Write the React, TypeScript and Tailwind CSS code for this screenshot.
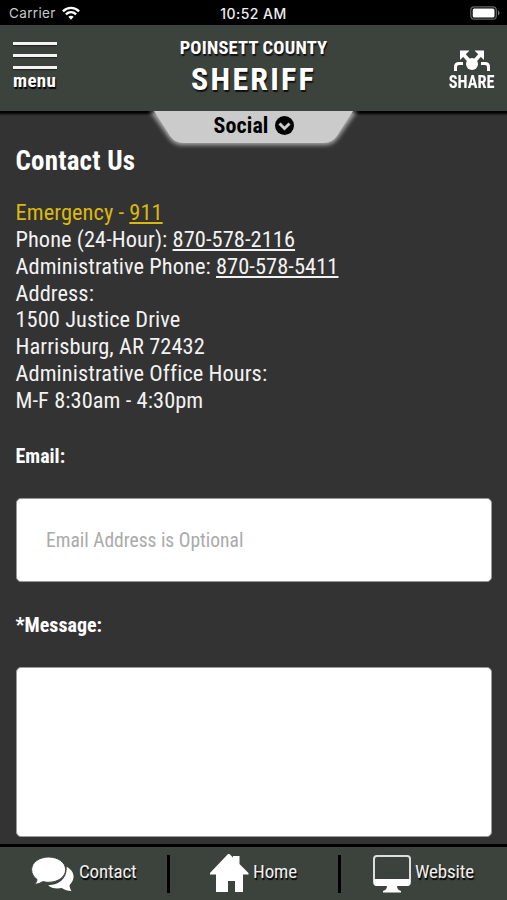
import type { ReactNode } from "react";

interface NavItemProps {
  label: string;
  icon: ReactNode;
  className: string;
}

const CONTACT_LINES = [
  "Address:",
  "1500 Justice Drive",
  "Harrisburg, AR 72432",
  "Administrative Office Hours:",
  "M-F 8:30am - 4:30pm",
];

function StatusBar() {
  return (
    <div className="relative flex h-[25px] shrink-0 items-center justify-between bg-black pl-[9px] pr-[7px] font-['Inter','Liberation_Sans',sans-serif] text-white [font-stretch:normal]">
      <div className="flex items-center gap-[6px] pt-[2px]">
        <span className="text-[13.5px] tracking-[0.35px] text-[#c8c8c8]">Carrier</span>
        <svg className="mb-[2px]" width="18" height="14" viewBox="0 0 19 14" fill="none" stroke="white" strokeWidth="2.6">
          <path d="M1 5.2C6 .4 13 .4 18 5.2" />
          <path d="M4.1 8.4c3.2-2.9 7.6-2.9 10.8 0" />
          <path d="M9.5 14 6.7 11c1.6-1.4 4-1.4 5.6 0z" fill="white" stroke="none" />
        </svg>
      </div>
      <span className="absolute left-0 right-0 top-[4px] text-center text-[14px] font-medium leading-[20px] tracking-[0.45px] text-[#eee]">
        10:52 AM
      </span>
      <svg width="30" height="14" viewBox="0 0 30 14">
        <rect x=".8" y=".8" width="25.5" height="12.4" rx="3.5" fill="none" stroke="#666" strokeWidth="1.2" />
        <rect x="2.7" y="2.5" width="21.8" height="9" rx="1.5" fill="white" />
        <path d="M28 4.5c2 1 2 4 0 5z" fill="#777" />
      </svg>
    </div>
  );
}

function ShareIcon() {
  return (
    <svg width="38" height="22" viewBox="0 0 38 22" fill="none" stroke="white" strokeWidth="3">
      <path d="M2.5 21v-4q0-3.5 3.5-3.5H10" />
      <path d="M35.5 21v-4q0-3.5-3.5-3.5H28" />
      <path d="m19 14-8-9M19 14l8-9" strokeWidth="3.6" />
      <circle cx="19" cy="14" r="6" fill="white" stroke="none" />
      <path d="M7 .5h9.5L7 10zM31 .5h-9.5L31 10z" fill="white" stroke="none" />
    </svg>
  );
}

function Header() {
  return (
    <header className="relative z-10 flex h-[86px] shrink-0 justify-between bg-[#3c423c] text-white shadow-[0_2px_2px_1px_#000]">
      <button className="flex w-[70px] flex-col pl-[13px] pt-[17px] text-left">
        <span className="flex w-[44px] flex-col gap-[9px]">
          <span className="h-[3px] bg-[#f2f5f2] shadow-[0_1px_1px_#222]" />
          <span className="h-[3px] bg-[#f2f5f2] shadow-[0_1px_1px_#222]" />
          <span className="h-[3px] bg-[#f2f5f2] shadow-[0_1px_1px_#222]" />
        </span>
        <span className="mt-[1px] text-[19px] font-bold leading-[22px] tracking-[0.3px] [text-shadow:1px_2px_1px_#000]">
          menu
        </span>
      </button>
      <h1 className="flex flex-col items-center pt-[12px] font-bold [text-shadow:1px_2px_1px_#111]">
        <span className="text-[18.5px] leading-[22px] tracking-[0.2px]">POINSETT COUNTY</span>
        <span className="mt-[1px] text-[32px] leading-[38px] tracking-[2.2px]">SHERIFF</span>
      </h1>
      <button className="flex w-[70px] flex-col items-center pt-[25px]">
        <ShareIcon />
        <span className="scale-x-[0.86] text-[19px] font-bold leading-[20px]">SHARE</span>
      </button>
    </header>
  );
}

function SocialTab() {
  return (
    <div className="relative z-20 flex h-[34px] shrink-0 justify-center">
      <svg className="absolute left-[142px] top-0" width="224" height="42" viewBox="0 0 224 42">
        <defs>
          <filter id="glow" x="-10%" y="-20%" width="120%" height="150%">
            <feGaussianBlur stdDeviation="2" />
          </filter>
        </defs>
        <path d="M8 0h207l-19 27q-5 7-13 7H40q-8 0-13-7z" fill="#aaa" filter="url(#glow)" />
        <path d="M12 0h199l-16 25q-5 7-13 7H41q-8 0-13-7z" fill="#cbcbcb" />
      </svg>
      <div className="relative flex h-[29px] items-center gap-[6px] text-[22px] font-bold tracking-[0.1px] text-black">
        Social
        <svg width="19" height="19" viewBox="0 0 19 19">
          <circle cx="9.5" cy="9.5" r="9.5" fill="black" />
          <path d="m4.5 7.5 5 5 5-5" fill="none" stroke="#ccc" strokeWidth="3" />
        </svg>
      </div>
    </div>
  );
}

function NavItem({ label, icon, className }: NavItemProps) {
  return (
    <a className={`flex h-full items-start ${className}`}>
      {icon}
      <span className="mt-[13px] text-[19px] leading-[24px] tracking-[-0.15px] text-[#f0f0f0] [text-shadow:1px_2px_1px_#000]">
        {label}
      </span>
    </a>
  );
}

function BottomNav() {
  return (
    <nav className="flex h-[56px] shrink-0 border-t-[3px] border-black bg-[#3c423c] text-white">
      <NavItem
        label="Contact"
        className="w-[167px] gap-[4px] pl-[31px]"
        icon={
          <svg className="mt-[10px]" width="44" height="35" viewBox="0 0 44 36" fill="white">
            <path d="M36 10c9 5 9 13 3 19 0 2 1 4 2 6-4 0-7-1-10-3-6 1-11 0-14-3 12 0 20-8 19-19z" />
            <path
              d="M17.5 0C27 0 35 5.5 35 13s-8 13-17.5 13c-2 0-4 0-6-.7C9 27 6 28 3 28c2-2 2.5-3 2.5-5C2 20.5 0 17 0 13 0 5.5 8 0 17.5 0z"
              stroke="#3c423c"
              strokeWidth="1"
            />
          </svg>
        }
      />
      <span className="mt-[8px] h-[38px] w-[3px] bg-black" />
      <NavItem
        label="Home"
        className="w-[168px] gap-[4px] pl-[40px]"
        icon={
          <svg className="mt-[7px]" width="39" height="38" viewBox="0 0 39 38" fill="white">
            <path d="M19.5 0 23 3.5V2h6.5v8l9 9v1.5H33V38h-8V27h-7v11H6V20.5H0V19L18 0z" />
          </svg>
        }
      />
      <span className="mt-[8px] h-[38px] w-[3px] bg-black" />
      <NavItem
        label="Website"
        className="flex-1 gap-[4px] pl-[32px]"
        icon={
          <svg className="mt-[8px]" width="38" height="38" viewBox="0 0 38 38">
            <rect x="1" y="1" width="36" height="29" rx="3" fill="none" stroke="#ddd" strokeWidth="2" />
            <path d="M1 24h36v4q0 3-3 3H4q-3 0-3-3zM14 31h10q0 4 4 5v1.5H10V36q4-1 4-5z" fill="white" />
          </svg>
        }
      />
    </nav>
  );
}

export default function App() {
  return (
    <div className="flex h-[900px] w-[507px] flex-col overflow-hidden bg-[#333] font-['Roboto_Condensed','Roboto',sans-serif] [font-stretch:75%]">
      <StatusBar />
      <Header />
      <SocialTab />

      <main className="flex min-h-0 flex-1 flex-col px-[15.5px] text-white">
        <h2 className="text-[27px] font-bold leading-[32px] tracking-[0.2px]">Contact Us</h2>

        <div className="mt-[22px] text-[22.4px] leading-[26.85px] tracking-[0.07px] text-[#f2f2f2]">
          <p className="text-[#dcb80d]">
            Emergency - <a className="underline">911</a>
          </p>
          <p>
            Phone (24-Hour): <a className="underline">870-578-2116</a>
          </p>
          <p>
            Administrative Phone: <a className="underline">870-578-5411</a>
          </p>
          {CONTACT_LINES.map((line) => (
            <p key={line}>{line}</p>
          ))}
        </div>

        <label className="mt-[30.2px] text-[20px] font-bold leading-[24px]">Email:</label>
        <input
          className="mt-[30px] h-[84px] shrink-0 rounded-[5px] border border-[#999] bg-white px-[29.5px] pt-[2px] text-[19.5px] placeholder:text-[#aaa]"
          placeholder="Email Address is Optional"
        />

        <label className="mt-[31px] text-[20px] font-bold leading-[24px]">*Message:</label>
        <textarea className="mt-[30px] h-[170px] shrink-0 resize-none rounded-[5px] border border-[#999] bg-white" />
      </main>

      <BottomNav />
    </div>
  );
}
